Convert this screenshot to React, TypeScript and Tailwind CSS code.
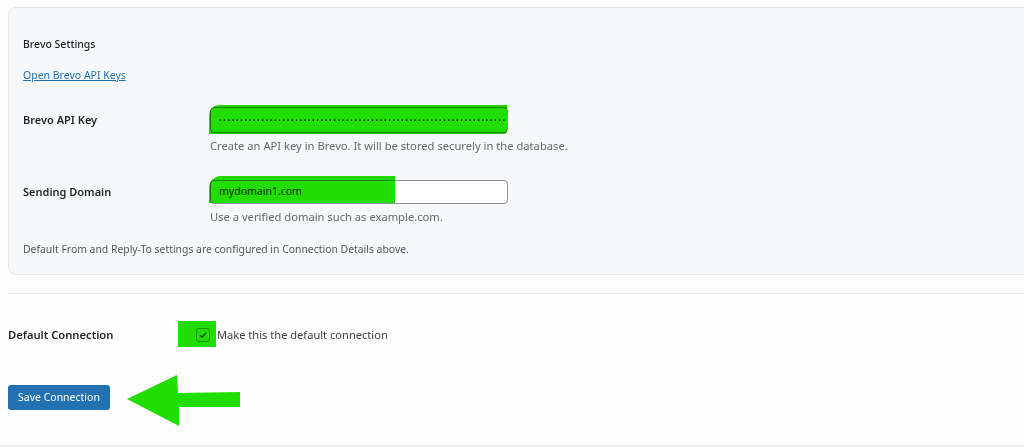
const font = { fontFamily: '"Noto Sans", "Open Sans", sans-serif' }

function Field({
  label,
  help,
  children,
}: {
  label: string
  help: string
  children: React.ReactNode
}) {
  return (
    <div>
      <div className="flex items-center">
        <div className="w-[187px] shrink-0 text-[11px] font-semibold text-[#1d2327]">{label}</div>
        {children}
      </div>
      <div className="ml-[187px] mt-[5px] text-[11.2px] leading-[16px] text-[#646970]">{help}</div>
    </div>
  )
}

function Arrow() {
  return (
    <svg width="116" height="52" viewBox="0 0 116 52" className="ml-[17px]">
      <path d="M0 24 L50 0 L51 18 L113 17 L113 32 L52 32 L52 51 Z" fill="#22dd00" />
    </svg>
  )
}

export default function App() {
  return (
    <div className="min-h-[447px] w-[1024px] overflow-hidden bg-[#fdfdfd] text-[#1d2327]" style={font}>
      <div className="ml-[8px] mr-[-20px] mt-[7px] rounded-l-lg border border-[#e3e6ea] bg-[#f6f8fa] pb-[17px] pl-[14px] pt-[28px]">
        <div className="text-[10.5px] font-medium leading-[16px]">Brevo Settings</div>
        <a href="#" className="mt-[15px] block w-fit text-[10.5px] leading-[16px] text-[#2271b1] underline">
          Open Brevo API Keys
        </a>

        <div className="mt-[24px]">
          <Field label="Brevo API Key" help="Create an API key in Brevo. It will be stored securely in the database.">
            <div className="relative">
              <div className="flex h-[26px] w-[298px] items-center overflow-hidden rounded-[4px] border border-[#8c8f94] bg-white pl-[8px] pr-[6px]">
                <span className="whitespace-nowrap text-[7px] leading-none tracking-[1.6px] text-[#2c3338]">
                  {"•".repeat(68)}
                </span>
              </div>
              <div className="absolute left-[-1px] top-[-2px] h-[29px] w-[298px] rounded-tl-[10px] rounded-br-[3px] bg-[#22dd00] mix-blend-multiply" />
            </div>
          </Field>
        </div>

        <div className="mt-[26px]">
          <Field label="Sending Domain" help="Use a verified domain such as example.com.">
            <div className="relative">
              <div className="flex h-[24px] w-[298px] items-center rounded-[4px] border border-[#8c8f94] bg-white pl-[8px] text-[10.5px] text-[#2c3338]">
                mydomain1.com
              </div>
              <div className="absolute left-[-1px] top-[-4px] h-[27px] w-[186px] rounded-tl-[12px] bg-[#22dd00] mix-blend-multiply" />
            </div>
          </Field>
        </div>

        <div className="mt-[16px] text-[10.4px] leading-[16px] text-[#50575e]">
          Default From and Reply-To settings are configured in Connection Details above.
        </div>
      </div>

      <div className="ml-[8px] mt-[18px] border-t border-[#e6e8ea]" />

      <div className="ml-[8px] mt-[28px] flex h-[26px] items-center">
        <div className="w-[188px] shrink-0 text-[11.2px] font-semibold">Default Connection</div>
        <div className="relative flex items-center">
          <div className="absolute left-[-18px] top-[-6px] h-[26px] w-[38px] bg-[#22dd00]" />
          <div className="relative flex h-[14px] w-[14px] items-center justify-center rounded-[3px] border border-[#168f00]">
            <svg width="10" height="10" viewBox="0 0 10 10">
              <path d="M2 5.2 L4.1 7.3 L8.2 2.6" fill="none" stroke="#0b4d00" strokeWidth="1.4" />
            </svg>
          </div>
          <span className="ml-[7px] text-[11.1px] text-[#3c434a]">Make this the default connection</span>
        </div>
      </div>

      <div className="ml-[8px] mt-[27px] flex items-start">
        <button className="mt-[10px] h-[25px] rounded-[3px] bg-[#2271b1] px-[10px] text-[10.5px] text-white">
          Save Connection
        </button>
        <Arrow />
      </div>

      <div className="mt-[18px] border-t-2 border-[#ececec]" />
    </div>
  )
}
